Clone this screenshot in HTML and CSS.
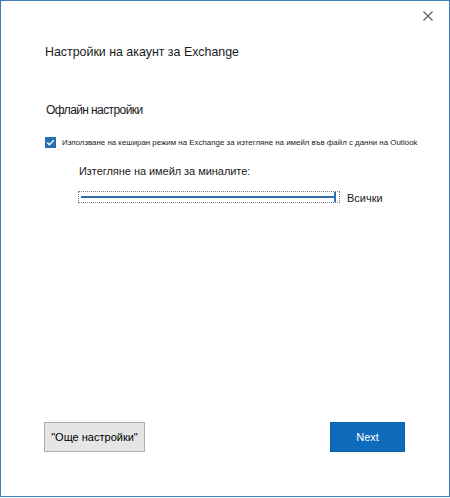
FILE: index.html
```html
<!DOCTYPE html>
<html lang="bg">
<head>
<meta charset="utf-8">
<link rel="stylesheet" href="styles.css">
</head>
<body>
<div class="window">
  <div class="titlebar">
    <svg class="close" width="10" height="10" viewBox="0 0 10 10"><path d="M0.5 0.5 L9.5 9.5 M9.5 0.5 L0.5 9.5" stroke="#5a5a5a" stroke-width="1.1" fill="none"/></svg>
  </div>
  <h1 class="title">Настройки на акаунт за Exchange</h1>
  <h2 class="heading">Офлайн настройки</h2>
  <div class="check-row">
    <span class="checkbox"><svg width="11" height="11" viewBox="0 0 11 11"><path d="M2.3 5.6 L4.4 7.7 L8.8 3.2" stroke="#fff" stroke-width="1.4" fill="none"/></svg></span>
    <span class="check-label">Използване на кеширан режим на Exchange за изтегляне на имейл във файл с данни на Outlook</span>
  </div>
  <div class="download">
    <div class="download-label">Изтегляне на имейл за миналите:</div>
    <div class="slider-row">
      <div class="slider">
        <div class="track"></div>
        <div class="thumb"></div>
      </div>
      <span class="slider-value">Всички</span>
    </div>
  </div>
  <div class="spacer"></div>
  <div class="buttons">
    <button class="btn btn-secondary">"Още настройки"</button>
    <button class="btn btn-primary">Next</button>
  </div>
</div>
</body>
</html>
```

FILE: styles.css
```css
html, body {
  margin: 0;
  padding: 0;
  background: #ffffff;
}
body {
  font-family: "Liberation Sans", Arial, sans-serif;
  color: #1a1a1a;
}
.window {
  box-sizing: border-box;
  width: 450px;
  height: 497px;
  border: 1px solid #3d7ab8;
  background: #ffffff;
  display: flex;
  flex-direction: column;
  padding: 0 44px 44px 43px;
}
.titlebar {
  display: flex;
  justify-content: flex-end;
  height: 42px;
  margin-right: -28px;
}
.close {
  margin-top: 10px;
  display: block;
}
.title {
  margin: 0;
  font-size: 12.4px;
  font-weight: normal;
  line-height: 18px;
  color: #1a1a1a;
  padding-left: 1px;
}
.heading {
  margin: 40px 0 0 0;
  font-size: 12px;
  letter-spacing: -0.6px;
  font-weight: normal;
  line-height: 18px;
  color: #1a1a1a;
  padding-left: 2px;
}
.check-row {
  display: flex;
  align-items: center;
  gap: 6px;
  margin-top: 17px;
  height: 12px;
  padding-left: 1px;
}
.checkbox {
  width: 11px;
  height: 11px;
  background: #2a6fb5;
  display: flex;
  align-items: center;
  justify-content: center;
  flex: none;
}
.checkbox svg {
  display: block;
}
.check-label {
  font-size: 7.9px;
  color: #1a1a1a;
  white-space: nowrap;
}
.download {
  padding-left: 34px;
  margin-top: 15px;
}
.download-label {
  font-size: 11px;
  letter-spacing: -0.05px;
  line-height: 16px;
  padding-left: 1px;
}
.slider-row {
  display: flex;
  align-items: center;
  gap: 7px;
  margin-top: 11px;
}
.slider {
  position: relative;
  box-sizing: border-box;
  width: 262px;
  height: 12px;
  border: 1px dotted #7a7a7a;
}
.track {
  position: absolute;
  left: 2px;
  right: 4px;
  top: 4px;
  height: 2px;
  background: #2f6fae;
}
.thumb {
  position: absolute;
  right: 3px;
  top: 0px;
  width: 2px;
  height: 10px;
  background: #2f6fae;
}
.slider-value {
  font-size: 11px;
  color: #1a1a1a;
  margin-top: 2px;
}
.spacer {
  flex: 1;
}
.buttons {
  display: flex;
  justify-content: space-between;
  align-items: center;
}
.btn {
  box-sizing: border-box;
  height: 30px;
  font-family: "Liberation Sans", Arial, sans-serif;
  font-size: 11px;
  cursor: default;
  padding: 0;
}
.btn-secondary {
  width: 101px;
  background: #e5e5e5;
  border: 1px solid #adadad;
  color: #000;
}
.btn-primary {
  width: 75px;
  background: #0f6cbd;
  border: 1px solid #0d5ea6;
  color: #fff;
}
```
